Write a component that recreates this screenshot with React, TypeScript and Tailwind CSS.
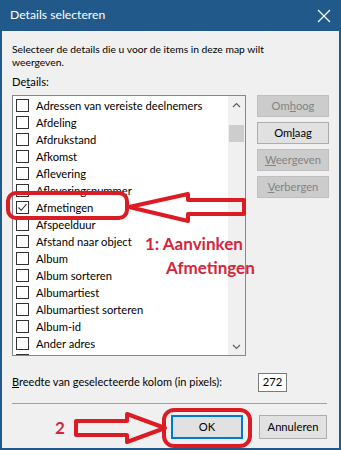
import React from 'react';

const ITEMS = [
  'Adressen van vereiste deelnemers',
  'Afdeling',
  'Afdrukstand',
  'Afkomst',
  'Aflevering',
  'Afleveringsnummer',
  'Afmetingen',
  'Afspeelduur',
  'Afstand naar object',
  'Album',
  'Album sorteren',
  'Albumartiest',
  'Albumartiest sorteren',
  'Album-id',
  'Ander adres',
  '',
];

const CHECKED = 'Afmetingen';

const Check: React.FC<{ on: boolean }> = ({ on }) => (
  <span className="flex h-[13px] w-[13px] shrink-0 items-center justify-center border border-[#333333] bg-white">
    {on && (
      <svg width="11" height="11" viewBox="0 0 11 11">
        <path d="M1.5 5.5 L4.2 8.3 L9.5 2.2" fill="none" stroke="#333" strokeWidth="1.1" />
      </svg>
    )}
  </span>
);

const SideButton: React.FC<{ label: React.ReactNode; enabled?: boolean }> = ({ label, enabled }) => (
  <div
    className={
      enabled
        ? 'flex h-[22px] items-center justify-center border border-[#adadad] bg-[#e1e1e1] text-[#000]'
        : 'flex h-[22px] items-center justify-center border border-[#bfbfbf] bg-[#cccccc] text-[#838383]'
    }
  >
    {label}
  </div>
);

export default function App() {
  return (
    <div
      className="relative h-[450px] w-[341px] overflow-hidden bg-[#f0f0f0] text-[11.2px] text-black"
      style={{ fontFamily: 'Lato, "Noto Sans", sans-serif' }}
    >
      <div className="flex h-full flex-col border-x-2 border-b-2 border-[#21598a]">
        {/* title bar */}
        <div className="flex h-[31px] shrink-0 items-center justify-between bg-[#21598a] pl-[8px] pr-[8px] text-[12.2px] text-white">
          <span>Details selecteren</span>
          <svg width="14" height="14" viewBox="0 0 14 14">
            <path d="M1 1 L13 13 M13 1 L1 13" stroke="#fff" strokeWidth="1.2" />
          </svg>
        </div>

        <div className="flex flex-1 flex-col px-[10px]">
          <p className="mt-[12px] text-[10.3px] leading-[13px]">
            Selecteer de details die u voor de items in deze map wilt
            <br />
            weergeven.
          </p>
          <div className="mt-[6px] leading-[13px]">
            De<span className="underline">t</span>ails:
          </div>

          <div className="mt-[7px] flex gap-[11px]">
            {/* list box */}
            <div className="flex h-[261px] w-[234px] overflow-hidden border border-[#828790] bg-white">
              <div className="flex-1 overflow-hidden pt-[1px]">
                {ITEMS.map((it, i) => (
                  <div key={i} className="flex h-[17px] items-center gap-[7px] pl-[3px]">
                    <Check on={it === CHECKED} />
                    {it && <span className="whitespace-nowrap leading-none">{it}</span>}
                  </div>
                ))}
              </div>
              <div className="flex w-[17px] flex-col items-center bg-[#f0f0f0]">
                <div className="flex h-[17px] items-center">
                  <svg width="9" height="6" viewBox="0 0 9 6">
                    <path d="M1 5 L4.5 1.5 L8 5" fill="none" stroke="#606060" strokeWidth="1.2" />
                  </svg>
                </div>
                <div className="mt-[12px] h-[17px] w-[15px] bg-[#cdcdcd]" />
                <div className="flex-1" />
                <div className="flex h-[17px] items-center">
                  <svg width="9" height="6" viewBox="0 0 9 6">
                    <path d="M1 1 L4.5 4.5 L8 1" fill="none" stroke="#606060" strokeWidth="1.2" />
                  </svg>
                </div>
              </div>
            </div>

            {/* side buttons */}
            <div className="flex w-[72px] flex-col gap-[5px]">
              <SideButton label={<span>Om<span className="underline">h</span>oog</span>} />
              <SideButton enabled label={<span>Om<span className="underline">l</span>aag</span>} />
              <SideButton label={<span><span className="underline">W</span>eergeven</span>} />
              <SideButton label={<span><span className="underline">V</span>erbergen</span>} />
            </div>
          </div>

          <div className="mt-[17px] flex items-center text-[11px]">
            <span className="w-[246px]">
              <span className="underline">B</span>reedte van geselecteerde kolom (in pixels):
            </span>
            <div className="flex h-[19px] w-[29px] items-center justify-center border border-[#7a7a7a] bg-white text-[11.2px]">272</div>
          </div>

          <div className="mt-[11px] h-px w-[315px] bg-[#a0a0a0]" />

          <div className="mt-[11px] flex justify-end gap-[16px] pr-[2px]">
            <div className="flex h-[24px] w-[72px] items-center justify-center border-2 border-[#0078d7] bg-[#e1e1e1]">OK</div>
            <div className="flex h-[24px] w-[68px] items-center justify-center border border-[#adadad] bg-[#e1e1e1]">Annuleren</div>
          </div>
        </div>
      </div>

      {/* red annotations */}
      <svg className="pointer-events-none absolute inset-0" width="341" height="450" viewBox="0 0 341 450">
        <rect x="8" y="193" width="119" height="25" rx="8" fill="none" stroke="#dc1c24" strokeWidth="4" />
        <path
          d="M129 207 L188 194 L188 200 L244 200 L244 214 L188 214 L188 221 Z"
          fill="none"
          stroke="#dc1c24"
          strokeWidth="4"
          strokeLinejoin="round"
        />
        <rect x="164" y="410" width="86" height="36" rx="10" fill="none" stroke="#dc1c24" strokeWidth="4" />
        <path
          d="M76 421 L127 421 L127 414 L165 428 L127 442 L127 435 L76 435 Z"
          fill="none"
          stroke="#dc1c24"
          strokeWidth="4"
          strokeLinejoin="round"
        />
      </svg>
      <div
        className="absolute left-[145px] top-[232px] text-[17px] font-bold leading-[24px] text-[#d3263a]"
        style={{ fontFamily: 'Lato, sans-serif' }}
      >
        <div>1: Aanvinken</div>
        <div className="pl-[21px]">Afmetingen</div>
      </div>
      <div
        className="absolute left-[55px] top-[416px] text-[17px] font-bold leading-[24px] text-[#d3263a]"
        style={{ fontFamily: 'Lato, sans-serif' }}
      >
        2
      </div>
    </div>
  );
}
